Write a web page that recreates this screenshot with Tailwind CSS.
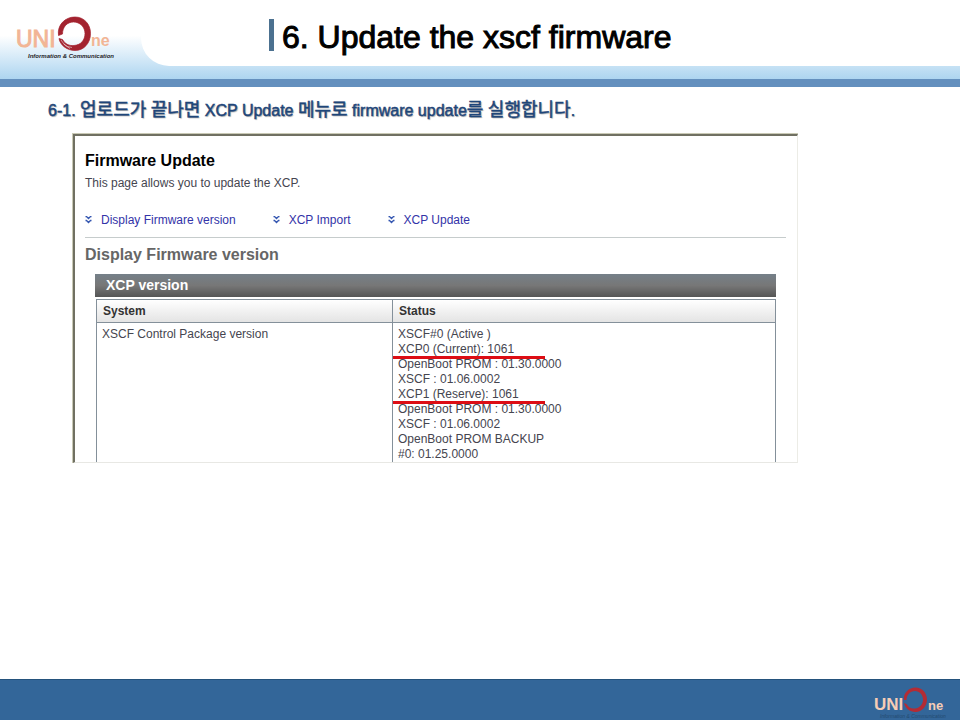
<!DOCTYPE html>
<html lang="ko">
<head>
  <meta charset="UTF-8" />
  <title>6. Update the xscf firmware</title>
  <meta name="viewport" content="width=device-width, initial-scale=1">
  <script src="https://cdn.jsdelivr.net/npm/@tailwindcss/browser@4"></script>
</head>
<body class="flex min-h-screen flex-col bg-white font-['Liberation_Sans','Noto_Sans_CJK_KR',sans-serif]">
  <!-- Header -->
  <header class="flex h-[87px] border-b-8 border-[#6490be] bg-linear-to-b from-white from-45% to-[#add5f0]">
    <div class="w-[141px] shrink-0 pt-3 pl-3">
      <svg class="h-[52px] w-[112px]" viewBox="12 12 112 52" role="img" aria-label="UNIOne Information &amp; Communication" font-family="Liberation Sans, sans-serif">
        <text x="16" y="47" font-size="23" fill="#f2b595" stroke="#f2b595" stroke-width="1">UNI</text>
        <text x="91" y="46" font-size="16" font-weight="700" fill="#f2b595">ne</text>
        <path fill="#a3232f" stroke="#a3232f" stroke-width=".7" d="M58.500 35.500 C57 25 65 17 75 17 C84 17 90.500 24 90.500 33.500 C90.500 43 84 50.500 75 50.500 C67 50.500 60 45 59 38.500 L62.500 39.500 C65 44 69 46 74 45.500 C81 45 85 40 85 33.500 C85 27 80 22 73.500 22 C67 22 62.500 27 62.500 34 Z" />
        <path fill="none" stroke="#fff" stroke-width=".5" d="M61 40 Q64 46 70 48.500 M64 44 Q67 47.200 72 47.500" />
        <text x="28" y="58" font-size="6" font-weight="700" font-style="italic" fill="#1f2226">Information &amp; Communication</text>
      </svg>
    </div>
    <div class="h-[66px] flex-1 rounded-bl-[28px] bg-white pt-[19px] pl-32">
      <h1 class="flex h-8 items-center border-l-[5px] border-[#4c7190] pl-2 text-[32px] leading-8 text-black [-webkit-text-stroke:1px_#000]"><span class="pt-1">6. Update the xscf firmware</span></h1>
    </div>
  </header>

  <!-- Main Content -->
  <main class="flex-1 px-12 pt-[11px]">
    <p class="text-[16px] leading-6 text-[#1f4679] [-webkit-text-stroke:0.5px_#1f4679] [text-shadow:1px_1px_1px_#aaaaaa] [&>span]:text-[18px]">6-1. <span>업로드가</span> <span>끝나면</span> XCP Update <span>메뉴로</span> firmware update<span>를</span> <span>실행합니다</span>.</p>

    <section class="mt-[10px] mr-[114px] ml-6 border-t border-l border-[#c9c9b5] text-[12px] text-[#45454f]">
      <div class="border-t-2 border-r border-b border-l-2 border-t-[#707062] border-r-[#ecece6] border-b-[#e8e8e4] border-l-[#707062] pt-[15px] pr-[11px] pl-[10px]">
        <h2 class="text-[16px] leading-5 font-bold text-black">Firmware Update</h2>
        <p class="mt-1 leading-4">This page allows you to update the XCP.</p>
        <nav class="mt-[21px] flex gap-[37px] border-b border-[#c6cccc] pb-[9px] leading-4 text-[#3333a8]">
          <a href="#display" class="flex items-center gap-[9px]">
            <svg class="h-2 w-[7px]" viewBox="0 0 7 8" fill="none" stroke="#3355b0" stroke-width="1.3"><path d="M.5 .5h1l2 2 2-2h1M.5 4.500h1l2 2 2-2h1" /></svg>Display Firmware version</a>
          <a href="#import" class="flex items-center gap-[9px]">
            <svg class="h-2 w-[7px]" viewBox="0 0 7 8" fill="none" stroke="#3355b0" stroke-width="1.3"><path d="M.5 .5h1l2 2 2-2h1M.5 4.500h1l2 2 2-2h1" /></svg>XCP Import</a>
          <a href="#update" class="flex items-center gap-[9px]">
            <svg class="h-2 w-[7px]" viewBox="0 0 7 8" fill="none" stroke="#3355b0" stroke-width="1.3"><path d="M.5 .5h1l2 2 2-2h1M.5 4.500h1l2 2 2-2h1" /></svg>XCP Update</a>
        </nav>
        <h2 id="display" class="mt-[7px] text-[16px] leading-5 font-bold text-[#666]">Display Firmware version</h2>

        <div class="mt-[9px] mr-[10px] ml-[10px]">
          <h3 class="bg-linear-to-b from-[#758089] via-[#777] to-[#555] pl-[11px] text-[14px] leading-[23px] font-bold text-white">XCP version</h3>
          <div class="mt-[2px] pl-px">
            <table class="w-full border-x border-t border-[#84909a]">
              <thead>
                <tr class="border-b border-[#84909a] bg-linear-to-b from-white to-[#e4e4e4] text-left text-[#333]">
                  <th class="h-[23px] w-[296px] border-r border-[#84909a] px-[6px]">System</th>
                  <th class="px-[6px]">Status</th>
                </tr>
              </thead>
              <tbody>
                <tr class="align-top leading-[15px]">
                  <td class="border-r border-[#84909a] px-[5px] pt-1">XSCF Control Package version</td>
                  <td class="pt-1">
                    <ul class="[&>li]:pl-[5px]">
                      <li>XSCF#0 (Active )</li>
                      <li class="relative">XCP0 (Current): 1061<span class="absolute top-[14px] left-0 h-[3px] w-[152px] bg-[#dd0d14]"></span></li>
                      <li>OpenBoot PROM : 01.30.0000</li>
                      <li>XSCF : 01.06.0002</li>
                      <li class="relative">XCP1 (Reserve): 1061<span class="absolute top-[14px] left-0 h-[3px] w-[152px] bg-[#dd0d14]"></span></li>
                      <li>OpenBoot PROM : 01.30.0000</li>
                      <li>XSCF : 01.06.0002</li>
                      <li>OpenBoot PROM BACKUP</li>
                      <li>#0: 01.25.0000</li>
                    </ul>
                  </td>
                </tr>
              </tbody>
            </table>
          </div>
        </div>
      </div>
    </section>
  </main>

  <!-- Footer -->
  <footer class="flex h-[41px] justify-end border-t border-[#24527c] bg-[#336699] pt-1 pr-[10px]">
    <svg class="h-9 w-[78px]" viewBox="0 -1 78 36" role="img" aria-label="UNIOne" font-family="Liberation Sans, sans-serif">
      <text x="2" y="25" font-size="17" font-weight="700" fill="#f6cdb6">UNI</text>
      <text x="56" y="25" font-size="13" font-weight="700" fill="#f6cdb6">ne</text>
      <path fill="#b32c35" d="M32 15 C31 8 37 2.500 43.500 2.500 C50 2.500 55 8 55 14.500 C55 21 50 27 43.500 27 C38 27 33 23 32 18 L34.500 19 C36.500 22.500 39.500 24 43 23.500 C48 23 51 19 51 14.500 C51 10 47.500 6 43 6 C38 6 34.500 10 34.500 15 Z" />
      <text x="8" y="33" font-size="5" font-style="italic" fill="#234a70">Information &amp; Communication</text>
    </svg>
  </footer>
</body>
</html>
